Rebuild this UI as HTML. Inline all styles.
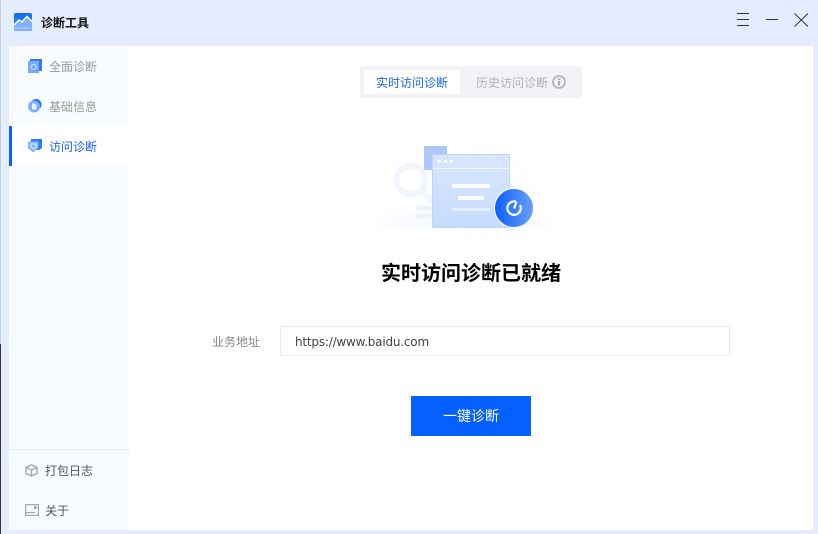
<!DOCTYPE html>
<html><head><meta charset="utf-8"><style>
*{box-sizing:border-box;margin:0;padding:0}
html,body{width:818px;height:534px;overflow:hidden;background:#e3edfe;font-family:"Liberation Sans","Noto Sans CJK SC",sans-serif}
.a{position:absolute;white-space:nowrap}
</style></head><body>
<div class="a" style="left:0;top:0;width:1px;height:534px;background:#c4cbd6"></div>
<div class="a" style="left:0;top:344px;width:1px;height:190px;background:#333"></div>
<svg class="a" style="left:14px;top:13px" width="18" height="18" viewBox="0 0 18 18"><defs><linearGradient id="l" x1="0" y1="0" x2="0" y2="1"><stop offset="0" stop-color="#0f6cf5"/><stop offset="1" stop-color="#3f8bf8"/></linearGradient></defs><rect width="18" height="18" rx="2" fill="url(#l)"/><path d="M0 12.500L5 7.500L8 9.500L13 4L18 9V18H0Z" fill="#7fb1fa"/><path d="M0 12L5 7L8 9L13 3.500L18 8.500" fill="none" stroke="#fff" stroke-width="1.500"/><path d="M1 15H17" stroke="#cfe1fd" stroke-dasharray="2 1"/></svg>
<div class="a" style="left:41px;top:15px;font-size:12px;line-height:17px;font-weight:700;color:#111">诊断工具</div>
<svg class="a" style="left:730px;top:8px" width="85" height="26" viewBox="0 0 85 26" fill="none" stroke="#25324a" stroke-width="1"><path d="M7 5.500H19M7 11.500H19M7 17.500H19"/><path d="M36 11.500H48"/><path d="M64.500 5.500L78 18.500M78 5.500L64.500 18.500"/></svg>
<div class="a" style="left:9px;top:46px;width:804px;height:484px;background:#fff"></div>
<div class="a" style="left:9px;top:46px;width:120px;height:484px;background:#f8fbff"></div>
<div class="a" style="left:9px;top:126px;width:120px;height:40px;background:#fff"></div>
<div class="a" style="left:9px;top:126px;width:3px;height:40px;background:#0f5fff"></div>
<div class="a" style="left:9px;top:449px;width:120px;height:1px;background:#e6ecf7"></div>
<svg class="a" style="left:28px;top:59px" width="14" height="14" viewBox="0 0 14 14"><rect x="2" width="12" height="12" fill="#2a7cf5"/><rect y="2" width="11" height="12" fill="#76a9f8"/><circle cx="5.500" cy="8" r="2.500" fill="none" stroke="#dbe9ff"/></svg>
<svg class="a" style="left:28px;top:99px" width="14" height="14" viewBox="0 0 14 14"><circle cx="8" cy="5.500" r="5.500" fill="#1c6ff5"/><circle cx="6" cy="7.500" r="6" fill="#7fb0fa"/><path d="M4 4.500H7L8.500 6V10.500H4Z" fill="#e9f2ff"/></svg>
<svg class="a" style="left:28px;top:139px" width="14" height="14" viewBox="0 0 14 14"><path d="M3 0H14V9L11 11H3Z" fill="#2a7cf5"/><path d="M0 2.500H10.500V9L5 13.500L0 9Z" fill="#86b4fa"/><path d="M3 5H8V8L5.500 10L3 8Z" fill="none" stroke="#e6f0ff"/></svg>
<div class="a" style="left:49px;top:59px;font-size:12px;line-height:17px;color:#999">全面诊断</div>
<div class="a" style="left:49px;top:99px;font-size:12px;line-height:17px;color:#999">基础信息</div>
<div class="a" style="left:49px;top:139px;font-size:12px;line-height:17px;color:#1a66f0">访问诊断</div>
<svg class="a" style="left:25px;top:464px" width="13" height="13" viewBox="0 0 13 13" fill="none" stroke="#a6a6a6" stroke-width="1.400"><path d="M6.500 1L12 3.500V9.500L6.500 12L1 9.500V3.500ZM1 3.500L6.500 6L12 3.500M6.500 6V12"/></svg>
<svg class="a" style="left:25px;top:504px" width="14" height="12" viewBox="0 0 14 12" fill="none" stroke="#a6a6a6" stroke-width="1.200"><rect x=".6" y=".6" width="12.800" height="10.800"/><path d="M1 8.500H10"/><rect x="9" y="2" width="2.500" height="3" fill="#a6a6a6" stroke="none"/></svg>
<div class="a" style="left:45px;top:463px;font-size:12px;line-height:17px;color:#555">打包日志</div>
<div class="a" style="left:45px;top:503px;font-size:12px;line-height:17px;color:#555">关于</div>
<div class="a" style="left:360px;top:66px;width:222px;height:32px;background:#f2f3f7"></div>
<div class="a" style="left:364px;top:70px;width:96px;height:24px;background:#fff"></div>
<div class="a" style="left:376px;top:75px;font-size:12px;line-height:17px;color:#1a66f0">实时访问诊断</div>
<div class="a" style="left:476px;top:75px;font-size:12px;line-height:17px;color:#b0b0b0">历史访问诊断</div>
<svg class="a" style="left:552px;top:75px" width="14" height="14" viewBox="0 0 14 14"><circle cx="7" cy="7" r="6" fill="none" stroke="#b4b4b4" stroke-width="1.800"/><rect x="6" y="6" width="2.200" height="4.500" fill="#a8a8a8"/><rect x="6" y="3.300" width="2.200" height="1.800" fill="#a8a8a8"/></svg>
<svg class="a" style="left:370px;top:140px" width="190" height="100" viewBox="0 0 190 100">
<defs>
<linearGradient id="w" x1="0" y1="0" x2="0" y2="1"><stop offset="0" stop-color="#d8e7fd"/><stop offset="1" stop-color="#c6dcfd"/></linearGradient>
<linearGradient id="b" x1="0" y1="0" x2="1" y2="0"><stop offset="0" stop-color="#0a5eff"/><stop offset="1" stop-color="#6aa0fb"/></linearGradient>
<radialGradient id="g"><stop offset="0" stop-color="#e6eefc" stop-opacity=".9"/><stop offset="1" stop-color="#fff" stop-opacity="0"/></radialGradient>
<radialGradient id="f" cx=".5" cy="1" r=".62"><stop offset="0" stop-color="#f3f7ff"/><stop offset=".65" stop-color="#f6f9ff" stop-opacity=".7"/><stop offset="1" stop-color="#fff" stop-opacity="0"/></radialGradient>
</defs>
<rect x="5" y="40" width="175" height="48" fill="url(#f)"/>
<circle cx="145" cy="68" r="32" fill="url(#g)"/>
<circle cx="115" cy="54" r="43" fill="none" stroke="#f2f4f9" stroke-dasharray="2 3"/>
<circle cx="41" cy="40" r="14.500" fill="none" stroke="#f0f5fe" stroke-width="6"/>
<path d="M52 51L63 62" stroke="#f0f5fe" stroke-width="6"/>
<rect x="46" y="66" width="17" height="4" fill="#ebf2fe"/><rect x="46" y="74" width="17" height="4" fill="#ebf2fe"/>
<rect x="54" y="6" width="23" height="24" fill="#adc9fb"/>
<rect x="62.500" y="14.500" width="77" height="73" fill="url(#w)" stroke="#bcd5fb"/>
<rect x="63" y="15" width="76" height="13" fill="#d6e5fd"/>
<rect x="63" y="28" width="76" height="1" fill="#f2f7ff"/>
<rect x="68" y="20" width="3" height="3" fill="#fff"/><rect x="74" y="20" width="3" height="3" fill="#fff"/><rect x="80" y="20" width="3" height="3" fill="#fff"/>
<rect x="82" y="44" width="38" height="4" fill="#fff"/><rect x="88" y="56" width="26" height="4" fill="#fff"/><rect x="82" y="68" width="38" height="3" fill="#e6effd"/>
<circle cx="144" cy="68" r="19.500" fill="url(#b)" stroke="#fff" stroke-width="1"/>
<path d="M146 61.700A6.700 6.700 0 1 0 150 65" fill="none" stroke="#fff" stroke-width="2.200"/><path d="M146.500 62L144 68.500" stroke="#fff" stroke-width="2.200"/>
</svg>
<div class="a" style="left:381px;top:260px;font-size:20px;line-height:28px;font-weight:700;color:#000">实时访问诊断已就绪</div>
<div class="a" style="left:212px;top:334px;font-size:12px;line-height:17px;color:#888">业务地址</div>
<div class="a" style="left:280px;top:326px;width:450px;height:30px;border:1px solid #e8ebf2;background:#fff"></div>
<div class="a" style="left:295px;top:334px;font-family:'DejaVu Sans','Liberation Sans',sans-serif;font-size:12px;letter-spacing:-.2px;line-height:16px;color:#444">https://www.baidu.com</div>
<div class="a" style="left:411px;top:396px;width:120px;height:40px;background:#0560ff;color:#fff;font-size:14px;line-height:41px;text-align:center">一键诊断</div>
</body></html>
